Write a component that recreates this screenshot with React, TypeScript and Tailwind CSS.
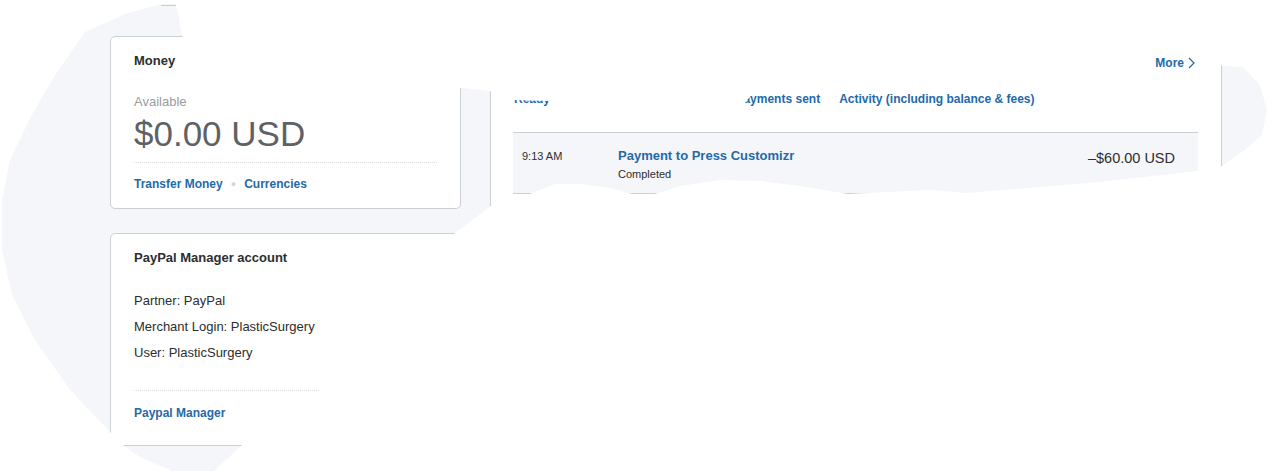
import React from "react";

const pts: [number, number][] = [
  [161, 4], [176, 4], [182, 35], [190, 60], [200, 86], [462, 88], [490, 91],
  [514, 100], [550, 101], [562, 112], [738, 112], [752, 94], [830, 91], [845, 48],
  [1205, 46], [1222, 66], [1243, 67], [1260, 85], [1267, 110], [1262, 135],
  [1245, 150], [1222, 166], [1198, 171], [1100, 182], [967, 193], [930, 190],
  [848, 194], [800, 186], [760, 181], [720, 180], [680, 186], [655, 194],
  [632, 194], [610, 188], [580, 184], [555, 184], [530, 194], [513, 196],
  [491, 206], [455, 233], [400, 300], [321, 389], [241, 446], [214, 471],
  [172, 471], [140, 457], [124, 446], [110, 432], [70, 390], [35, 340],
  [12, 295], [2, 250], [2, 200], [10, 160], [30, 118], [55, 75], [85, 32],
  [125, 14],
];

const maskPath =
  "M0 0H1267V471H0Z M" + pts.map((p) => `${p[0]} ${p[1]}`).join(" L") + " Z";

export default function App() {
  return (
    <div className="relative w-[1267px] h-[471px] overflow-hidden bg-[#f5f6f9] font-['Liberation_Sans',Arial,sans-serif] text-[#2c2e2f]">
      <div className="flex items-start pt-[36px] pl-[110px]">
        {/* Left column */}
        <div className="flex w-[351px] flex-col gap-[24px]">
          {/* Money card */}
          <div className="rounded-[5px] border border-[#cbd0d4] bg-white px-[23px] pt-[16px] pb-[16px]">
            <div className="text-[13px] font-bold leading-[16px]">Money</div>
            <div className="mt-[25px] text-[13px] leading-[16px] text-[#9a9c9e]">Available</div>
            <div className="mt-[4px] text-[35px] leading-[40px] text-[#5f6265]">$0.00 USD</div>
            <div className="mt-[8px] border-t border-dotted border-[#dcdfe2]" />
            <div className="mt-[13px] flex items-center text-[12px] font-bold leading-[16px] text-[#1f6aa8]">
              <span>Transfer Money</span>
              <span className="mx-[8px] text-[9px] font-normal text-[#d4d7da]">●</span>
              <span>Currencies</span>
            </div>
          </div>

          {/* PayPal Manager card */}
          <div className="rounded-[5px] border border-[#cbd0d4] bg-white px-[23px] pt-[16px] pb-[24px]">
            <div className="text-[13px] font-bold leading-[16px]">PayPal Manager account</div>
            <div className="mt-[27px] text-[13px] leading-[16px]">Partner: PayPal</div>
            <div className="mt-[10px] text-[13px] leading-[16px]">Merchant Login: PlasticSurgery</div>
            <div className="mt-[10px] text-[13px] leading-[16px]">User: PlasticSurgery</div>
            <div className="mt-[29px] border-t border-dotted border-[#dcdfe2]" />
            <div className="mt-[14px] text-[12px] font-bold leading-[16px] text-[#1f6aa8]">Paypal Manager</div>
          </div>
        </div>

        {/* Activity panel */}
        <div className="ml-[29px] h-[300px] w-[732px] rounded-[5px] border border-[#cbd0d4] bg-white pl-[22px] pr-[23px] pt-[18px]">
          <div className="flex h-[16px] items-center justify-between">
            <span className="ml-[1px] text-[15px] font-bold leading-[16px]">Recent activity</span>
            <span className="mr-[3px] flex items-center gap-[4px] text-[12px] font-bold leading-[16px] text-[#1f6aa8]">
              More
              <svg width="7" height="12" viewBox="0 0 7 12" fill="none">
                <path d="M1 1l5 5-5 5" stroke="#1f6aa8" strokeWidth="1.2" />
              </svg>
            </span>
          </div>
          <div className="mt-[20px] ml-[1px] flex text-[12px] font-bold leading-[16px] text-[#1f6aa8]">
            <span>Ready to ship</span>
            <span className="ml-[17px]">Payments received</span>
            <span className="ml-[17px]">Payments sent</span>
            <span className="ml-[19px]">Activity (including balance &amp; fees)</span>
          </div>
          <div className="mt-[25px] flex border-y border-[#cbd0d4] bg-[#f5f6f9] pl-[9px] pr-[23px] pt-[15px] pb-[12px]">
            <div className="w-[96px] text-[11px] leading-[16px]">9:13 AM</div>
            <div className="flex-1">
              <div className="text-[13px] font-bold leading-[16px] text-[#1f6aa8]">Payment to Press Customizr</div>
              <div className="mt-[3px] text-[11px] leading-[14px]">Completed</div>
            </div>
            <div className="mt-[1px] text-[14.5px] leading-[18px]">–$60.00 USD</div>
          </div>
        </div>
      </div>

      {/* torn white overlay */}
      <svg
        className="pointer-events-none absolute left-0 top-0"
        width="1267"
        height="471"
        viewBox="0 0 1267 471"
      >
        <path d={maskPath} fill="#ffffff" fillRule="evenodd" />
        <path d="M161 5.5H176" stroke="#c9cdd1" strokeWidth="1" />
      </svg>
    </div>
  );
}
